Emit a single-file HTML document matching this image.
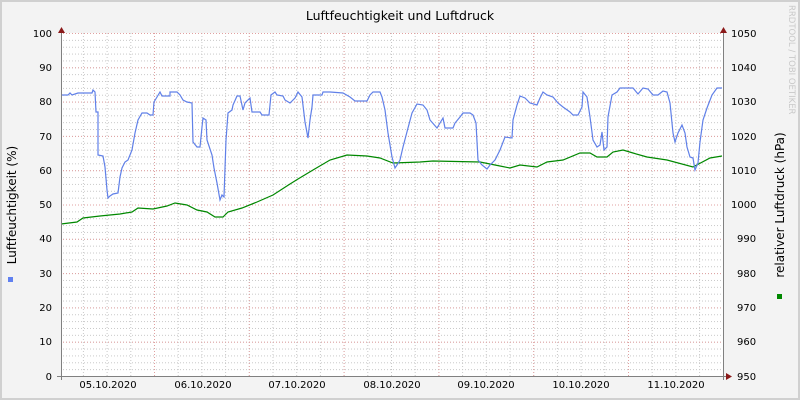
<!DOCTYPE html>
<html><head><meta charset="utf-8"><style>
html,body{margin:0;padding:0;background:#f3f3f3;}
svg{display:block;font-family:"DejaVu Sans","Liberation Sans",sans-serif;}
</style></head><body>
<svg width="800" height="400" viewBox="0 0 800 400" xmlns="http://www.w3.org/2000/svg">
<defs>
<pattern id="hmin" patternUnits="userSpaceOnUse" x="0" y="33" width="800" height="6.86"><line x1="0" y1="0.5" x2="800" y2="0.5" stroke="#c8c8c8" stroke-width="1" stroke-dasharray="1,2"/></pattern>
<pattern id="hmaj" patternUnits="userSpaceOnUse" x="0" y="33" width="800" height="34.3"><line x1="0" y1="0.5" x2="800" y2="0.5" stroke="#e0a0a0" stroke-width="1" stroke-dasharray="1,2"/></pattern>
<pattern id="vmin" patternUnits="userSpaceOnUse" x="11.8" y="0" width="23.7" height="400"><line x1="0.5" y1="0" x2="0.5" y2="400" stroke="#c8c8c8" stroke-width="1" stroke-dasharray="1,2"/></pattern>
<pattern id="vmaj" patternUnits="userSpaceOnUse" x="59.2" y="0" width="94.8" height="400"><line x1="0.5" y1="0" x2="0.5" y2="400" stroke="#e0a0a0" stroke-width="1" stroke-dasharray="1,2"/></pattern>
</defs>
<rect x="0" y="0" width="800" height="400" fill="#f3f3f3"/>
<rect x="1" y="1" width="798" height="398" fill="none" stroke="#d0d0d0" stroke-width="2"/>
<rect x="61" y="33" width="662" height="343" fill="#fff"/>
<rect x="62" y="33" width="660" height="343" fill="url(#hmin)"/>
<rect x="62" y="33" width="660" height="343" fill="url(#vmin)"/>
<rect x="62" y="33" width="660" height="343" fill="url(#hmaj)"/>
<rect x="62" y="33" width="660" height="343" fill="url(#vmaj)"/>
<text x="400" y="20" font-size="12.5" text-anchor="middle" fill="#000">Luftfeuchtigkeit und Luftdruck</text>
<text transform="translate(16,205) rotate(-90)" font-size="12" text-anchor="middle" fill="#000">Luftfeuchtigkeit (%)</text>
<text transform="translate(784,205) rotate(-90)" font-size="12" text-anchor="middle" fill="#000">relativer Luftdruck (hPa)</text>
<text transform="translate(789,5) rotate(90)" font-size="8.5" fill="#c8c8c8">RRDTOOL / TOBI OETIKER</text>
<rect x="8" y="277" width="5" height="5" fill="#6080f0"/>
<rect x="777" y="294" width="5" height="5" fill="#008800"/>
<g font-size="10" fill="#000" text-anchor="end">
<text x="52" y="37">100</text><text x="52" y="71">90</text><text x="52" y="105">80</text><text x="52" y="140">70</text><text x="52" y="174">60</text><text x="52" y="208">50</text><text x="52" y="242">40</text><text x="52" y="277">30</text><text x="52" y="311">20</text><text x="52" y="345">10</text><text x="52" y="380">0</text>
</g>
<g font-size="10" fill="#000">
<text x="731" y="37">1050</text><text x="731" y="71">1040</text><text x="731" y="105">1030</text><text x="731" y="140">1020</text><text x="731" y="174">1010</text><text x="731" y="208">1000</text><text x="737" y="242">990</text><text x="737" y="277">980</text><text x="737" y="311">970</text><text x="737" y="345">960</text><text x="737" y="380">950</text>
</g>
<g font-size="10" fill="#000" text-anchor="middle">
<text x="108" y="388">05.10.2020</text><text x="203" y="388">06.10.2020</text><text x="297" y="388">07.10.2020</text><text x="392" y="388">08.10.2020</text><text x="486" y="388">09.10.2020</text><text x="581" y="388">10.10.2020</text><text x="676" y="388">11.10.2020</text>
</g>
<polyline fill="none" stroke="#008800" stroke-width="1.2" points="61,224 77,222 83,218 100,216 120,214 132,212 138,208 153,209 167,206 175,203 187,205 197,210 207,212 215,217 223,217 228,212 242,208 257,202 273,195 290,184 298,179 313,170 330,160 347,155 367,156 380,158 393,163 420,162 433,161 480,162 500,166 510,168 520,165 537,167 547,162 563,160 580,153 590,153 597,157 607,157 613,152 623,150 633,153 647,157 667,160 693,167 710,158 722,156"/>
<polyline fill="none" stroke="#6080e8" stroke-width="1.2" points="61,95 68,95 70,93 72,95 78,93 92,93 93,90 95,92 96,112 98,112 98,155 103,156 105,167 107,190 108,198 110,196 113,194 118,193 120,177 122,168 125,162 128,160 132,150 135,133 138,120 142,113 147,113 150,115 153,115 154,102 157,97 160,92 162,96 170,96 170,92 177,92 180,95 183,100 187,102 192,103 193,142 197,147 200,147 202,127 203,118 206,120 207,140 212,155 214,168 217,183 220,200 222,195 224,197 226,140 228,113 232,110 233,105 237,96 240,96 243,110 245,103 250,98 252,112 260,112 262,115 269,115 271,95 275,92 277,95 283,96 285,100 290,103 295,98 298,92 302,97 305,122 308,138 310,120 312,107 313,95 322,95 323,92 330,92 343,93 350,97 355,101 367,101 370,95 373,92 380,92 382,97 385,110 388,133 392,157 395,168 397,165 400,160 403,147 408,128 412,113 417,104 423,105 427,110 430,120 437,128 440,123 443,118 445,128 453,128 455,123 460,117 463,113 470,113 473,115 476,123 478,160 482,165 487,169 490,165 495,160 500,150 505,137 512,138 513,120 517,105 520,96 525,98 530,103 537,105 540,98 543,92 547,95 553,97 558,103 563,107 570,112 573,115 578,115 582,107 583,92 587,97 590,117 593,140 597,147 600,145 602,132 604,150 607,147 608,117 612,95 617,92 620,88 633,88 638,94 643,88 648,89 653,95 658,95 663,91 667,92 670,103 673,133 675,142 678,133 682,125 685,133 687,147 690,157 693,158 695,170 698,163 700,142 703,120 707,108 712,95 717,88 722,88"/>
<g stroke="#808080" stroke-width="1">
<line x1="61.5" y1="30" x2="61.5" y2="380"/>
<line x1="723.5" y1="30" x2="723.5" y2="380"/>
<line x1="57" y1="376.5" x2="726" y2="376.5"/>
</g>
<polygon points="58,33 65,33 61.5,27" fill="#8b1a1a"/>
<polygon points="720,33 727,33 723.5,27" fill="#8b1a1a"/>
<polygon points="726,373 726,380 732,376.5" fill="#8b1a1a"/>
</svg>
</body></html>
